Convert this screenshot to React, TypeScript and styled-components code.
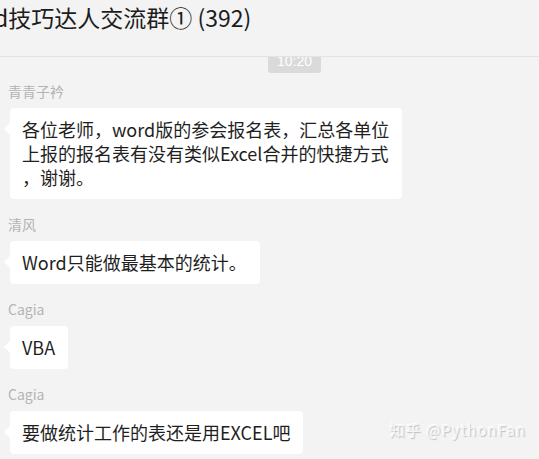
import React from 'react';
import styled, { createGlobalStyle } from 'styled-components';

const GlobalStyle = createGlobalStyle`
  html, body {
    margin: 0;
    padding: 0;
    background: #f3f3f3;
  }
  body {
    font-family: "Noto Sans CJK SC", "Noto Sans", sans-serif;
  }
`;

const Window = styled.div`
  position: relative;
  width: 539px;
  height: 459px;
  overflow: hidden;
  background: #f3f3f3;
`;

const Header = styled.header`
  position: relative;
  z-index: 1;
  height: 56px;
  border-bottom: 1px solid #e3e3e3;
  background: #f3f3f3;
  overflow: hidden;
`;

const Title = styled.h1`
  margin: 0 0 0 -6px;
  padding-top: 2px;
  font-size: 23px;
  line-height: 30px;
  font-weight: 400;
  color: #1c1c1c;
  white-space: nowrap;
`;

const Chat = styled.div`
  display: flex;
  flex-direction: column;
  align-items: flex-start;
`;

const TimeRow = styled.div`
  align-self: stretch;
  display: flex;
  justify-content: center;
  margin-top: -7px;
  padding-left: 50px;
  margin-bottom: 8px;
`;

const TimeBadge = styled.span`
  display: inline-block;
  height: 23px;
  line-height: 23px;
  padding: 0 9px;
  border-radius: 3px;
  background: #dadada;
  color: #ffffff;
  font-family: "Liberation Sans", Arial, sans-serif;
  font-size: 14px;
`;

const Message = styled.div`
  display: flex;
  flex-direction: column;
  align-items: flex-start;
  margin-bottom: 15px;
`;

const Name = styled.div`
  margin-left: 8px;
  margin-bottom: 7px;
  font-size: 14px;
  line-height: 20px;
  color: #b3b3b3;
`;

const Bubble = styled.div`
  position: relative;
  margin-left: 10px;
  padding: 9px 13px 10px 12px;
  border-radius: 4px;
  background: #ffffff;
  font-size: 18px;
  line-height: 24px;
  color: #1f1f1f;
  white-space: nowrap;

  &::before {
    content: '';
    position: absolute;
    left: -6px;
    top: 15px;
    border-top: 6px solid transparent;
    border-bottom: 6px solid transparent;
    border-right: 6px solid #ffffff;
  }
`;

const Watermark = styled.div`
  position: absolute;
  right: 13px;
  bottom: 19px;
  font-size: 15px;
  line-height: 20px;
  color: #f4f4f4;
  text-shadow: 1px 1px 1px rgba(0, 0, 0, 0.22), -1px -1px 0 rgba(255, 255, 255, 0.9);
  letter-spacing: 1px;
`;

type Msg = { name: string; lines: string[] };

const messages: Msg[] = [
  {
    name: '青青子衿',
    lines: [
      '各位老师，word版的参会报名表，汇总各单位',
      '上报的报名表有没有类似Excel合并的快捷方式',
      '，谢谢。',
    ],
  },
  { name: '清风', lines: ['Word只能做最基本的统计。'] },
  { name: 'Cagia', lines: ['VBA'] },
  { name: 'Cagia', lines: ['要做统计工作的表还是用EXCEL吧'] },
];

export default function App() {
  return (
    <Window>
      <GlobalStyle />
      <Header>
        <Title>d技巧达人交流群① (392)</Title>
      </Header>
      <Chat>
        <TimeRow>
          <TimeBadge>10:20</TimeBadge>
        </TimeRow>
        {messages.map((m, i) => (
          <Message key={i}>
            <Name>{m.name}</Name>
            <Bubble>
              {m.lines.map((line, j) => (
                <React.Fragment key={j}>
                  {j > 0 && <br />}
                  {line}
                </React.Fragment>
              ))}
            </Bubble>
          </Message>
        ))}
      </Chat>
      <Watermark>知乎 @PythonFan</Watermark>
    </Window>
  );
}
